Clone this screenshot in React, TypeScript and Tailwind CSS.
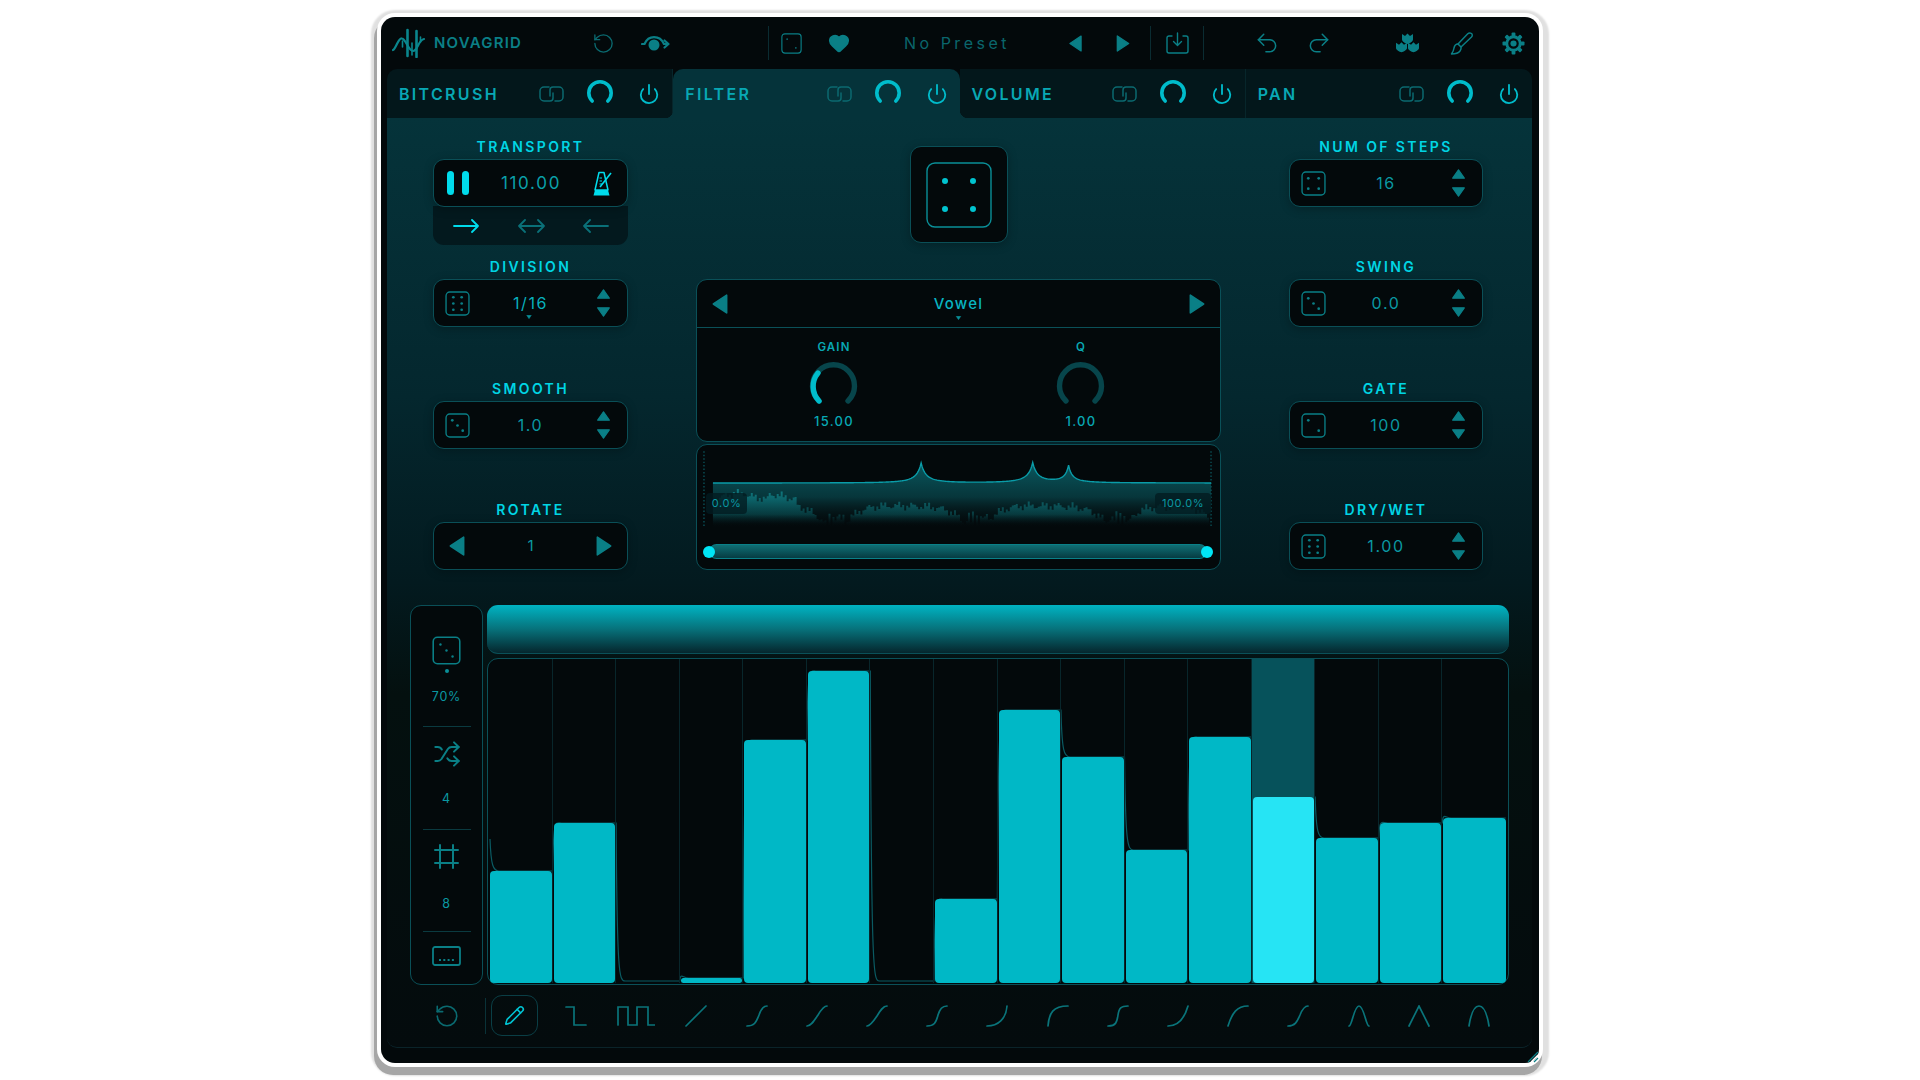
import { Heart, Pencil, Power, Redo2, RotateCcw, Shuffle, Undo2 } from "lucide-react";
import type { ReactNode } from "react";

const DIM = "#0a7f86";

const tabs = ["BITCRUSH", "FILTER", "VOLUME", "PAN"];

const barTops = [871, 823, 0, 978, 740, 671, 0, 899, 710, 757, 850, 737, 797, 838, 823, 818];

const shapes = [
  { w: 22, d: "M1 2H9V20H21" },
  { w: 38, d: "M1 20V2H11V20H20V2H31V20H38" },
  { w: 22, d: "M1 21L21 1" },
  { w: 22, d: "M1 21C8 21 10 18 13 10C15 4 17 1 21 1" },
  { w: 22, d: "M1 21C5 21 8 16 12 10C15 5 18 1 21 1" },
  { w: 22, d: "M1 21C4 21 7 17 11 11C14 6 17 1 21 1" },
  { w: 22, d: "M1 21C8 21 10 18 12 10C14 4 16 1 21 1" },
  { w: 22, d: "M1 21C12 21 20 14 21 1" },
  { w: 22, d: "M1 21C2 8 6 1 21 1" },
  { w: 22, d: "M1 21C9 21 10 17 11 10C12 3 14 1 21 1" },
  { w: 22, d: "M1 21C10 21 17 15 21 1" },
  { w: 22, d: "M1 21C5 8 10 1 21 1" },
  { w: 22, d: "M1 21C8 21 10 17 13 10C15 5 17 1 21 1" },
  { w: 22, d: "M1 21C4 21 6 1 11 1C16 1 18 21 21 21" },
  { w: 22, d: "M1 21L11 1L21 21" },
  { w: 22, d: "M1 21C3 8 6 1 11 1C16 1 19 8 21 21" },
];

const dicePatterns: Record<number, number[][]> = {
  2: [[7, 7], [17, 17]],
  3: [[7, 7], [12, 12], [17, 17]],
  4: [[7, 7], [17, 7], [7, 17], [17, 17]],
  6: [[8, 6], [16, 6], [8, 12], [16, 12], [8, 18], [16, 18]],
};

function Dice({ n, className, r = 1.3, sw = 1.3 }: { n: number; className?: string; r?: number; sw?: number }) {
  return (
    <svg viewBox="0 0 24 24" className={className} fill="none">
      <rect x="1" y="1" width="22" height="22" rx="3.5" stroke="currentColor" strokeWidth={sw} />
      {dicePatterns[n].map(([x, y]) => (
        <circle key={x + "-" + y} cx={x} cy={y} r={r} fill="currentColor" />
      ))}
    </svg>
  );
}

function Tri({ dir, className }: { dir: "l" | "r" | "u" | "d"; className?: string }) {
  const pts = {
    l: "13,1 13,17 1,9",
    r: "1,1 1,17 13,9",
    u: "1,11 15,11 8,1",
    d: "1,1 15,1 8,11",
  }[dir];
  const box = dir === "l" || dir === "r" ? "0 0 14 18" : "0 0 16 12";
  return (
    <svg viewBox={box} className={className}>
      <polygon points={pts} fill="currentColor" stroke="currentColor" strokeWidth="1.4" strokeLinejoin="round" />
    </svg>
  );
}

function Logo() {
  return (
    <svg viewBox="0 0 33 30" className="h-[30px] w-[33px]" fill="none" stroke="#0a868d" strokeLinecap="round">
      <path d="M15.5 2V28M24.5 3V29" strokeWidth="2.6" />
      <path d="M20 15V27M10.5 13V19M28.5 9V14" strokeWidth="1.6" />
      <path d="M1 22C4 21 6 10 9.7 10.3C14 10.5 16 23 21 23C26 23 26 12 32 11" strokeWidth="2.2" />
    </svg>
  );
}

function Eye() {
  return (
    <svg viewBox="0 0 29 15" className="h-[15px] w-[29px]" fill="none">
      <circle cx="13" cy="9" r="5.5" fill={DIM} />
      <path d="M1 8H3.5C5.5 3.5 9 1.2 13 1.2C17.5 1.2 21 3.5 23 8H27" stroke={DIM} strokeWidth="2.2" strokeLinecap="round" />
      <path d="M23.5 4.5L27.5 8L23.5 11.5" stroke={DIM} strokeWidth="2.2" strokeLinecap="round" strokeLinejoin="round" />
    </svg>
  );
}

function SaveIcon() {
  return (
    <svg viewBox="0 0 23 22" className="h-[22px] w-[23px]" fill="none" stroke={DIM} strokeWidth="1.4" strokeLinecap="round" strokeLinejoin="round">
      <path d="M6 4H3A2 2 0 0 0 1 6V19A2 2 0 0 0 3 21H20A2 2 0 0 0 22 19V6A2 2 0 0 0 20 4H17" />
      <path d="M11.5 1V13M7.5 9.5L11.5 13.5L15.5 9.5" />
    </svg>
  );
}

function Flower() {
  const tulip = "M-5.5 -4.5L-2.5 -2.5L0 -5L2.5 -2.5L5.5 -4.5V1C5.5 3 2 5 0 5.5C-2 5 -5.5 3 -5.5 1Z";
  return (
    <svg viewBox="0 0 23 20" className="h-[20px] w-[23px]" fill={DIM}>
      <path d={tulip} transform="translate(11.5 5.5)" />
      <path d={tulip} transform="translate(5.5 14) scale(1 .95)" />
      <path d={tulip} transform="translate(17.5 14) scale(1 .95)" />
    </svg>
  );
}

function Brush() {
  return (
    <svg viewBox="0 0 23 23" className="h-[23px] w-[23px]" fill="none" stroke={DIM} strokeWidth="1.5" strokeLinejoin="round">
      <path d="M21.5 1.5C20 .5 18.5 1 17.5 2L8 12L11 15L21.5 5C22.5 4 22.5 2.5 21.5 1.5Z" />
      <path d="M8 12C5.5 12 4.5 13.5 4 16C3.7 18 2.7 20.5 1.5 22C5 22 8.5 21 10 19C11 17.5 11.3 16 11 15" />
    </svg>
  );
}

function Gear() {
  return (
    <svg viewBox="0 0 24 24" className="h-[23px] w-[23px]" fill="none" stroke={DIM}>
      <circle cx="12" cy="12" r="7" strokeWidth="3" />
      <circle cx="12" cy="12" r="3.2" fill={DIM} stroke="none" />
      {[0, 45, 90, 135, 180, 225, 270, 315].map((a) => (
        <rect key={a} x="10" y="0.5" width="4" height="4" rx="1" fill={DIM} stroke="none" transform={`rotate(${a} 12 12)`} />
      ))}
    </svg>
  );
}

function LinkIcon() {
  return (
    <svg viewBox="0 0 25 18" className="ml-[1px] h-[18px] w-[25px]" fill="none" stroke="#0b6a70" strokeWidth="1.5" strokeLinecap="round">
      <path d="M10 2H5A4 4 0 0 0 1 6V12A4 4 0 0 0 5 16H11A3 3 0 0 0 14 13V8" />
      <path d="M11 11V5A3 3 0 0 1 14 2H20A4 4 0 0 1 24 6V12A4 4 0 0 1 20 16H16" />
    </svg>
  );
}

function TabKnob() {
  return (
    <svg viewBox="0 0 26 24" className="-mt-[3px] h-[24px] w-[26px] overflow-visible" fill="none">
      <path d="M5.2 21A11.2 11.2 0 1 1 20.8 21" stroke="#00bccb" strokeWidth="3.6" strokeLinecap="round" />
    </svg>
  );
}

function Tab({ label, active, last }: { label: string; active?: boolean; last?: boolean }) {
  return (
    <div
      className={
        "relative flex h-[49px] items-center " +
        (active ? "rounded-t-[10px] bg-[#05333a]" : "bg-[#03171b] " + (last ? "" : "border-r border-[#07262b]"))
      }
    >
      {active && (
        <>
          <div className="absolute bottom-0 -left-[8px] h-[8px] w-[8px] bg-[radial-gradient(circle_at_0_0,transparent_8px,#05333a_8.5px)]" />
          <div className="absolute -right-[8px] bottom-0 z-10 h-[8px] w-[8px] bg-[radial-gradient(circle_at_100%_0,transparent_8px,#05333a_8.5px)]" />
        </>
      )}
      <span className="flex-1 pl-[12px] text-[16px] font-semibold tracking-[0.145em] text-[#08a8b4]">{label}</span>
      <LinkIcon />
      <span className="ml-[23px]">
        <TabKnob />
      </span>
      <Power className="mr-[12px] ml-[25px] h-[22px] w-[22px] text-[#00bccb]" strokeWidth={2} />
    </div>
  );
}

function Label({ children }: { children: ReactNode }) {
  return (
    <div className="flex h-[24px] items-center justify-center pb-[2px] text-[14px] font-semibold tracking-[0.17em] text-[#00d5e4]">
      {children}
    </div>
  );
}

function Box({ children }: { children: ReactNode }) {
  return (
    <div className="relative flex h-[48px] items-center rounded-[11px] border border-[#0a4f57] bg-[#03090b] shadow-[0_2px_10px_rgba(0,0,0,0.25)]">
      {children}
    </div>
  );
}

function Stepper({ label, value, n, menu, bright }: { label: string; value: string; n: number; menu?: boolean; bright?: boolean }) {
  return (
    <div>
      <Label>{label}</Label>
      <Box>
        <Dice n={n} className="ml-[11px] h-[25px] w-[25px] text-[#0a7f86]" />
        <span className={"flex-1 pr-[5px] text-center text-[16px] tracking-[0.1em] " + (bright ? "text-[#08b0bd]" : "text-[#0a98a2]")}>
          {value}
        </span>
        <div className="mr-[16px] flex w-[15px] flex-col gap-[8px]">
          <Tri dir="u" className="h-[10px] w-[15px] text-[#0a7f86]" />
          <Tri dir="d" className="h-[10px] w-[15px] text-[#0a7f86]" />
        </div>
        {menu && <Tri dir="d" className="absolute bottom-[7px] left-[91px] h-[4px] w-[8px] text-[#0a8f98]" />}
      </Box>
    </div>
  );
}

function Transport() {
  return (
    <div>
      <Label>TRANSPORT</Label>
      <div className="relative z-10">
        <Box>
          <div className="ml-[13px] flex gap-[8px]">
            <div className="h-[24px] w-[7px] rounded-full bg-[#00dcec]" />
            <div className="h-[24px] w-[7px] rounded-full bg-[#00dcec]" />
          </div>
          <span className="flex-1 pt-[1px] text-center text-[17px] tracking-[0.1em] text-[#0aa0aa]">110.00</span>
          <svg viewBox="0 0 20 25" className="mr-[14px] h-[25px] w-[20px]" fill="none">
            <path d="M6 1.5H11L15 19H2Z" stroke="#00dcec" strokeWidth="1.5" strokeLinejoin="round" />
            <path d="M2 19H15L16.5 24.5H.5Z" fill="#00dcec" />
            <path d="M7 16L18 2" stroke="#00dcec" strokeWidth="1.6" />
            <path d="M6.5 7H9M6.5 10H9M6.5 13H9" stroke="#00dcec" strokeWidth="1.2" />
          </svg>
        </Box>
      </div>
      <div className="-mt-[1px] flex h-[39px] items-center rounded-b-[11px] bg-[#03191e] pl-[20px]">
        <svg viewBox="0 0 26 14" className="h-[14px] w-[26px]" fill="none" stroke="#00dcec" strokeWidth="1.8" strokeLinecap="round" strokeLinejoin="round">
          <path d="M1 7H25M19 1L25 7L19 13" />
        </svg>
        <svg viewBox="0 0 27 14" className="ml-[39px] h-[14px] w-[27px]" fill="none" stroke="#0a7078" strokeWidth="1.8" strokeLinecap="round" strokeLinejoin="round">
          <path d="M1 7H26M7 1L1 7L7 13M20 1L26 7L20 13" />
        </svg>
        <svg viewBox="0 0 26 14" className="ml-[38px] h-[14px] w-[26px]" fill="none" stroke="#0a7078" strokeWidth="1.8" strokeLinecap="round" strokeLinejoin="round">
          <path d="M1 7H25M7 1L1 7L7 13" />
        </svg>
      </div>
    </div>
  );
}

function SmallKnob({ label, value, active }: { label: string; value: string; active?: boolean }) {
  return (
    <div className="flex w-[100px] flex-col items-center">
      <div className="flex h-[12px] items-center text-[11.5px] font-semibold tracking-[0.1em] text-[#08a8b4]">{label}</div>
      <svg viewBox="0 0 48 42" className="mt-[9px] h-[42px] w-[48px] overflow-visible" fill="none" strokeWidth="5.4" strokeLinecap="round">
        <path d="M9 38A21 21 0 1 1 38 38" stroke="#07454b" />
        {active && <path d="M9 38A21 21 0 0 1 8 10" stroke="#00bccb" />}
      </svg>
      <div className="mt-[10px] flex h-[14px] items-center text-[13px] font-medium tracking-[0.1em] text-[#08a8b4]">{value}</div>
    </div>
  );
}

// filter response: flat line with three sharp resonance peaks
function curveY(x: number) {
  const peaks = [
    [225, 20, 17],
    [337, 20, 17],
    [373, 17, 13],
  ];
  let y = 38;
  for (const [px, a, w] of peaks) y -= a / Math.pow(1 + Math.abs(x - px) / (w * 0.55), 2);
  return y;
}

function hump(x: number) {
  const pieces = [
    [16, 130, 44, 66],
    [150, 268, 60, 62],
    [291, 410, 60, 62],
    [432, 516, 62, 62],
  ];
  for (const [a, b, t0, t1] of pieces) {
    if (x >= a && x <= b) {
      const p = (x - a) / (b - a);
      const edge = Math.pow(Math.abs(p - 0.5) * 2, 4) * 16;
      return t0 + (t1 - t0) * p + edge;
    }
  }
  return 80 - Math.abs(Math.sin(x * 0.7)) * 10;
}

function Spectrum() {
  const line: string[] = [];
  for (let x = 16; x <= 516; x += 1) line.push(`${x},${curveY(x).toFixed(2)}`);
  let bars = "";
  for (let x = 16; x < 516; x += 2) {
    const jitter = Math.sin(x * 1.7) * 2.2 + Math.sin(x * 0.43) * 2.4;
    const boost = x > 70 && x < 100 ? -6 : x < 50 ? -2 : 0;
    bars += `M${x} 84V${(hump(x) + jitter + boost).toFixed(1)}H${x + 2}V84Z`;
  }
  return (
    <svg viewBox="0 0 525 99" className="h-[99px] w-[523px]" fill="none">
      <defs>
        <linearGradient id="areaFill" x1="0" y1="20" x2="0" y2="84" gradientUnits="userSpaceOnUse">
          <stop offset="0" stopColor="#0a5f66" stopOpacity="0.9" />
          <stop offset="0.5" stopColor="#08454b" stopOpacity="0.75" />
          <stop offset="1" stopColor="#03090b" stopOpacity="0" />
        </linearGradient>
        <linearGradient id="barFill" x1="0" y1="40" x2="0" y2="82" gradientUnits="userSpaceOnUse">
          <stop offset="0" stopColor="#128f96" stopOpacity="0.9" />
          <stop offset="0.7" stopColor="#0a5a60" stopOpacity="0.55" />
          <stop offset="1" stopColor="#03090b" stopOpacity="0" />
        </linearGradient>
      </defs>
      <path d={`M7 6V82M516 6V82`} stroke="#0a5057" strokeWidth="1.4" strokeDasharray="1.5 2" />
      <polygon points={`16,84 ${line.join(" ")} 516,84`} fill="url(#areaFill)" />
      <path d={bars} fill="url(#barFill)" />
      <polyline points={line.join(" ")} stroke="#0a9ca8" strokeWidth="1.4" />
    </svg>
  );
}

function FilterPanel() {
  return (
    <div>
      <div className="rounded-[11px] border border-[#0a5058] bg-[#03090b]">
        <div className="relative flex h-[48px] items-center border-b border-[#0a5058] px-[15px]">
          <Tri dir="l" className="h-[20px] w-[16px] text-[#0a7f86]" />
          <span className="flex-1 pt-[1px] text-center text-[15px] font-medium tracking-[0.08em] text-[#08b4c1]">Vowel</span>
          <Tri dir="r" className="h-[20px] w-[16px] text-[#0a7f86]" />
          <Tri dir="d" className="absolute bottom-[7px] left-[257px] h-[4px] w-[9px] text-[#0a8f98]" />
        </div>
        <div className="flex h-[113px] pt-[14px] pl-[87px]">
          <SmallKnob label="GAIN" value="15.00" active />
          <div className="ml-[147px]">
            <SmallKnob label="Q" value="1.00" />
          </div>
        </div>
      </div>
      <div className="relative mt-[2px] h-[126px] rounded-[11px] border border-[#0a5058] bg-[#03090b]">
        <Spectrum />
        <div className="absolute top-[48px] left-[9px] flex h-[21px] w-[41px] items-center justify-center rounded-[4px] bg-[#031c20]/80 text-[11px] tracking-[0.05em] text-[#0a98a2]">
          0.0%
        </div>
        <div className="absolute top-[48px] left-[458px] flex h-[21px] w-[56px] items-center justify-center rounded-[4px] bg-[#031c20]/80 text-[11px] tracking-[0.05em] text-[#0a98a2]">
          100.0%
        </div>
        <div className="relative ml-[12px] h-[15px] w-[498px] rounded-full border-y border-[#0a8088] bg-[linear-gradient(180deg,#0f6f75,#063c42)]">
          <div className="absolute top-[1px] -left-[6px] h-[12px] w-[12px] rounded-full bg-[#00e5f5]" />
          <div className="absolute top-[1px] -right-[6px] h-[12px] w-[12px] rounded-full bg-[#00e5f5]" />
        </div>
      </div>
    </div>
  );
}

function Sidebar() {
  return (
    <div className="flex h-[380px] w-[73px] flex-col items-center rounded-[11px] border border-[#0a4f57] bg-[#03090b] text-[12.5px] tracking-[0.06em] text-[#0a98a2]">
      <div className="flex h-[121px] w-[48px] flex-col items-center border-b border-[#0a3a40] pt-[30px]">
        <Dice n={3} r={1} className="h-[29px] w-[29px] text-[#0a7f86]" />
        <div className="mt-[4px] h-[4px] w-[4px] rounded-full bg-[#0a8f98]" />
        <div className="mt-[17px] leading-[14px]">70%</div>
      </div>
      <div className="flex h-[103px] w-[48px] flex-col items-center border-b border-[#0a3a40] pt-[13px]">
        <Shuffle className="h-[28px] w-[28px] text-[#0a7f86]" strokeWidth={1.7} />
        <div className="mt-[24px] leading-[14px]">4</div>
      </div>
      <div className="flex h-[102px] w-[48px] flex-col items-center border-b border-[#0a3a40] pt-[14px]">
        <svg viewBox="0 0 25 25" className="h-[25px] w-[25px]" fill="none" stroke="#0a7f86" strokeWidth="2" strokeLinecap="round">
          <path d="M6 1V24M19 1V24M1 6H24M1 19H24" />
        </svg>
        <div className="mt-[28px] leading-[14px]">8</div>
      </div>
      <svg viewBox="0 0 29 20" className="mt-[14px] h-[20px] w-[29px]" fill="none">
        <rect x="1" y="1" width="27" height="18" rx="2" stroke="#0a7f86" strokeWidth="1.8" />
        <path d="M7 14H22" stroke="#0a7f86" strokeWidth="1.8" strokeDasharray="2 2.3" />
      </svg>
    </div>
  );
}

function stepCurve() {
  const w = 63.55;
  const levels = barTops.map((t) => (t === 0 ? 981 : t) - 659);
  let d = `M2 ${levels[0] - 32}`;
  levels.forEach((y, i) => {
    const x = 1 + i * w;
    const start = i === 0 ? x + 1 : x;
    d += `C${start + 1} ${y - 6} ${start + 3} ${y} ${start + 9} ${y}`;
    d += `L${x + w} ${y}`;
  });
  return d;
}

function Bars() {
  return (
    <div className="relative grid h-[327px] grid-cols-16 rounded-[11px] border border-[#0a5058] bg-[#03090b] pr-[2px] pb-[1px] pl-[1px]">
      <svg viewBox="0 0 1020 325" className="absolute inset-0 h-[325px] w-[1020px]" fill="none">
        <path d={stepCurve()} stroke="#0a5a62" strokeWidth="1.2" />
      </svg>
      {barTops.map((top, i) => (
        <div
          key={i}
          className={
            "relative flex items-end " +
            (i === 12 ? "bg-[#06525b] " : "") +
            (i < 15 ? "border-r border-[#08262b]" : "")
          }
        >
          {top > 0 && (
            <div
              className={"ml-px w-full rounded-[4px] " + (i === 12 ? "bg-[#26e4f4]" : "bg-[#00b8c6]")}
              style={{ height: 983 - top }}
            />
          )}
        </div>
      ))}
    </div>
  );
}

function Toolbar() {
  return (
    <div className="mt-[10px] flex h-[41px] items-center pl-[47px]">
      <RotateCcw className="h-[26px] w-[26px] text-[#0a6a70]" strokeWidth={1.5} />
      <div className="ml-[25px] h-[36px] w-px bg-[#0a3238]" />
      <div className="ml-[5px] flex h-[41px] w-[47px] items-center justify-center rounded-[11px] border border-[#0a3e45]">
        <Pencil className="h-[21px] w-[21px] text-[#00c4d3]" strokeWidth={1.8} />
      </div>
      <div className="ml-[8px] flex">
        {shapes.map((s, i) => (
          <div key={i} className="flex w-[60.2px] justify-center">
            <svg viewBox={`0 0 ${s.w} 22`} style={{ width: s.w, height: 22 }} fill="none" stroke="#0a747a" strokeWidth="1.7" strokeLinecap="round">
              <path d={s.d} />
            </svg>
          </div>
        ))}
      </div>
    </div>
  );
}

export default function App() {
  return (
    <div className="h-[1080px] w-full overflow-hidden bg-white pt-[17px] font-['Inter',sans-serif]">
      <div className="relative mx-auto h-[1046px] w-[1158px] rounded-[14px] bg-[#03090b] pr-[7px] pl-[6px] shadow-[0_0_0_4px_#ffffff,-2px_7px_0_5px_#a6a6a6,0_3px_2px_10px_#e0e0e0]">
        <header className="flex h-[52px] items-center pl-[5px]">
          <div className="flex w-[200px] items-center">
            <Logo />
            <span className="ml-[9px] text-[15px] font-semibold tracking-[0.08em] text-[#0a7f86]">NOVAGRID</span>
          </div>
          <RotateCcw className="h-[23px] w-[23px] text-[#0a6a70]" strokeWidth={1.4} />
          <div className="ml-[26px]">
            <Eye />
          </div>
          <div className="ml-[98px] h-[34px] w-px bg-[#0a2c32]" />
          <Dice n={2} r={0.9} className="ml-[12px] h-[21px] w-[21px] text-[#0a7f86]" />
          <Heart className="ml-[26px] h-[22px] w-[22px] text-[#0a7f86]" fill="#0a7f86" />
          <span className="ml-[0px] w-[214px] text-center text-[16px] tracking-[0.22em] text-[#0a666c]">No Preset</span>
          <Tri dir="l" className="ml-[5px] h-[17px] w-[13px] text-[#0a7f86]" />
          <Tri dir="r" className="ml-[34px] h-[17px] w-[14px] text-[#0a7f86]" />
          <div className="ml-[20px] h-[34px] w-px bg-[#0a2c32]" />
          <div className="ml-[15px]">
            <SaveIcon />
          </div>
          <div className="ml-[14px] h-[34px] w-px bg-[#0a2c32]" />
          <Undo2 className="ml-[50px] h-[26px] w-[26px] text-[#0a7f86]" strokeWidth={1.4} />
          <Redo2 className="ml-[26px] h-[26px] w-[26px] text-[#0a7f86]" strokeWidth={1.4} />
          <div className="ml-[64px]">
            <Flower />
          </div>
          <div className="ml-[31px]">
            <Brush />
          </div>
          <div className="ml-[29px]">
            <Gear />
          </div>
        </header>

        <div className="grid grid-cols-4 overflow-visible">
          {tabs.map((t, i) => (
            <div key={t} className={i === 0 ? "overflow-hidden rounded-tl-[10px]" : i === 3 ? "overflow-hidden rounded-tr-[10px]" : ""}>
              <Tab label={t} active={t === "FILTER"} last={i === 3} />
            </div>
          ))}
        </div>

        <main className="h-[930px] rounded-[10px] rounded-t-none border-b border-[#0a2329] bg-[linear-gradient(180deg,#05333a_0%,#04272e_30%,#031a1f_50%,#04100f_62%,#040b0d_100%)]">
          <div className="flex pt-[17px] pl-[46px]">
            <div className="w-[195px]">
              <Transport />
              <div className="mt-[10px]">
                <Stepper label="DIVISION" value="1/16" n={6} menu bright />
              </div>
              <div className="mt-[50px]">
                <Stepper label="SMOOTH" value="1.0" n={3} />
              </div>
              <div className="mt-[49px]">
                <Label>ROTATE</Label>
                <Box>
                  <Tri dir="l" className="ml-[15px] h-[20px] w-[16px] text-[#0a7f86]" />
                  <span className="flex-1 text-center text-[15px] text-[#0a98a2]">1</span>
                  <Tri dir="r" className="mr-[15px] h-[20px] w-[16px] text-[#0a7f86]" />
                </Box>
              </div>
            </div>

            <div className="ml-[68px] w-[525px] pt-[11px]">
              <div className="mx-auto flex h-[97px] w-[98px] items-center justify-center rounded-[11px] border border-[#0a4f57] bg-[#03090b] shadow-[0_2px_10px_rgba(0,0,0,0.25)]">
                <svg viewBox="0 0 66 66" className="h-[66px] w-[66px]" fill="none">
                  <rect x="1" y="1" width="64" height="64" rx="8" stroke="#0a8f98" strokeWidth="1.4" />
                  <circle cx="19" cy="19" r="3" fill="#00c4d0" />
                  <circle cx="47" cy="19" r="3" fill="#00c4d0" />
                  <circle cx="19" cy="47" r="3" fill="#00c4d0" />
                  <circle cx="47" cy="47" r="3" fill="#00c4d0" />
                </svg>
              </div>
              <div className="mt-[36px]">
                <FilterPanel />
              </div>
            </div>

            <div className="ml-[68px] w-[194px]">
              <Stepper label="NUM OF STEPS" value="16" n={4} />
              <div className="mt-[48px]">
                <Stepper label="SWING" value="0.0" n={3} />
              </div>
              <div className="mt-[50px]">
                <Stepper label="GATE" value="100" n={2} />
              </div>
              <div className="mt-[49px]">
                <Stepper label="DRY/WET" value="1.00" n={6} />
              </div>
            </div>
          </div>

          <div className="mt-[35px] flex pl-[23px]">
            <Sidebar />
            <div className="ml-[4px] w-[1022px]">
              <div className="h-[49px] rounded-[11px] border-b border-[#0a5058] bg-[linear-gradient(180deg,#00b4c3_0%,#07727b_50%,#05262d_100%)]" />
              <div className="mt-[4px]">
                <Bars />
              </div>
            </div>
          </div>

          <Toolbar />
        </main>

        <svg viewBox="0 0 12 12" className="absolute right-0 bottom-0 h-[12px] w-[12px]" fill="none" strokeWidth="1.2">
          <path d="M1 11L11 1" stroke="#0a7f86" />
          <path d="M4 11L11 4" stroke="#ffffff" />
          <path d="M7 11L11 7" stroke="#0a7f86" />
        </svg>
      </div>
    </div>
  );
}
